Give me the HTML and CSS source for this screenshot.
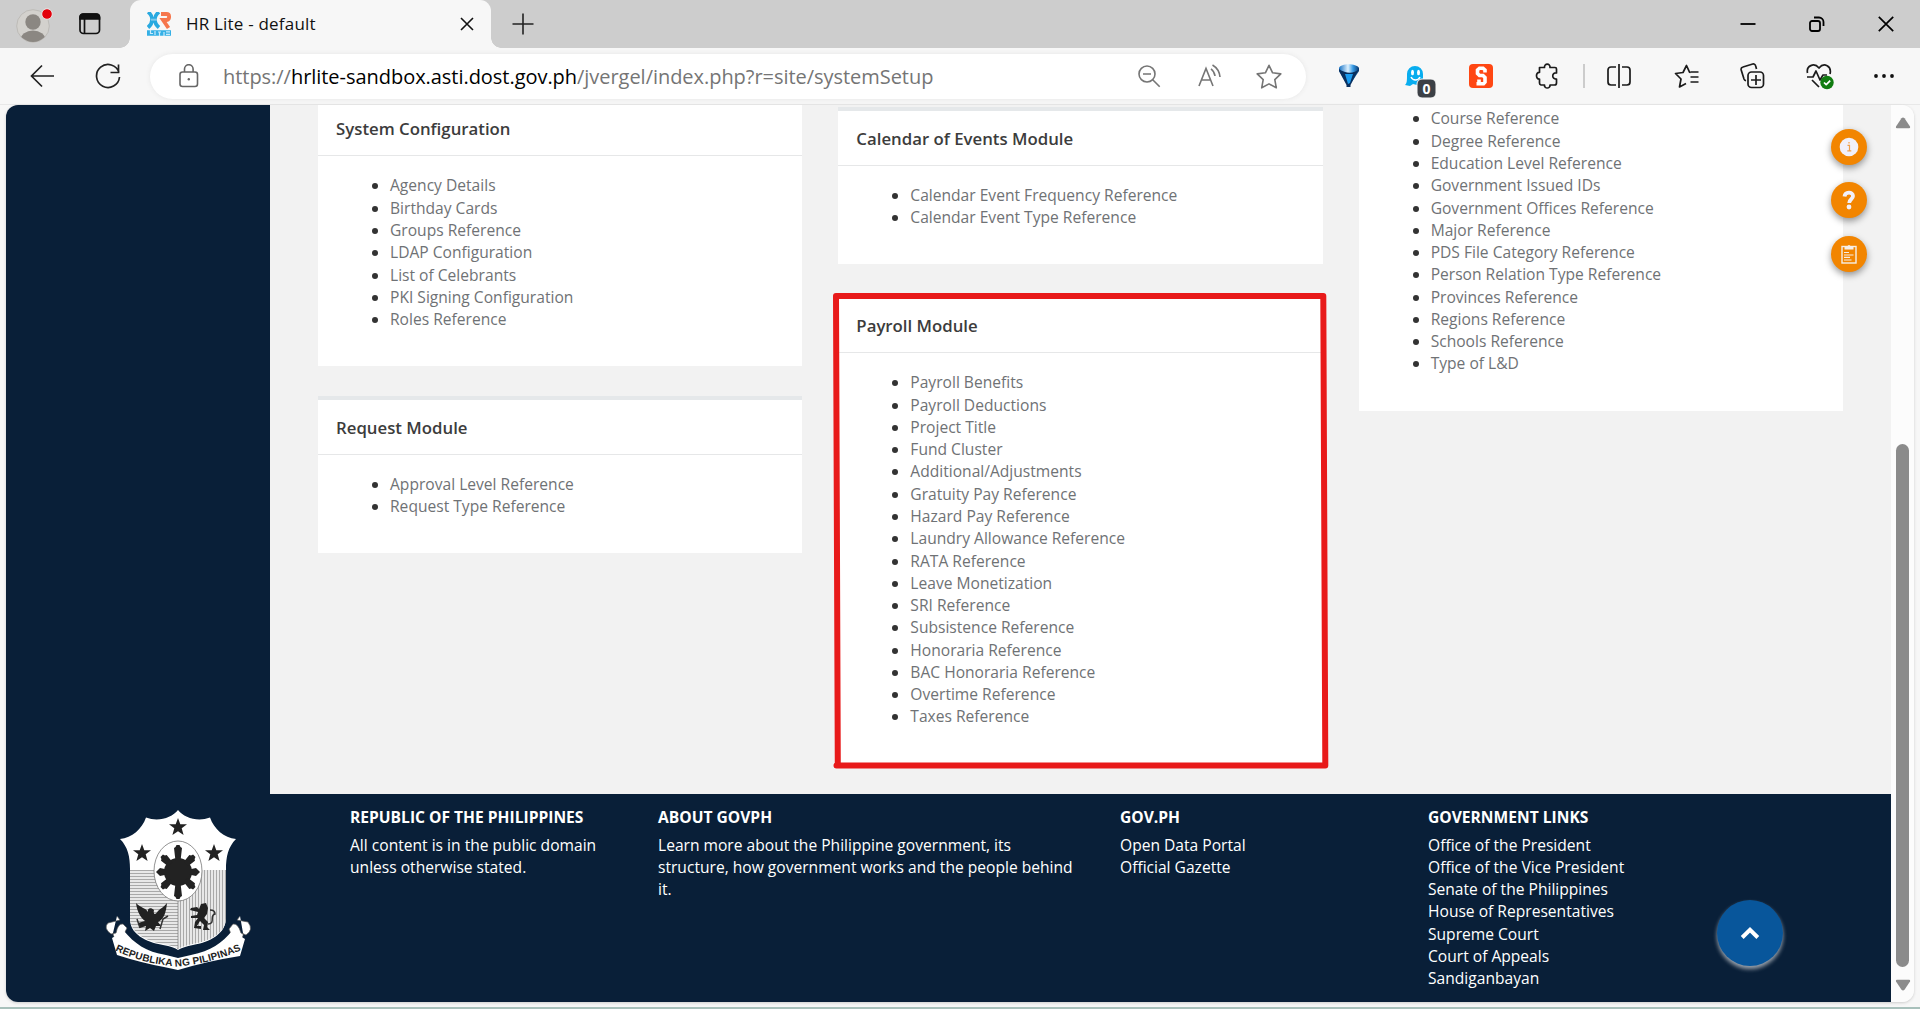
FILE: index.html
```html
<!DOCTYPE html>
<html lang="en">
<head>
<meta charset="utf-8">
<title>HR Lite - default</title>
<link rel="stylesheet" href="styles.css">
</head>
<body>
<div class="browser">
  <div class="tabbar">
    <svg class="avatar" width="44" height="42" viewBox="0 0 44 42"><defs><clipPath id="av"><circle cx="17" cy="20" r="16"/></clipPath></defs><circle cx="17" cy="20" r="16.3" fill="#d3d1cd" stroke="#bdbbb7"/><g clip-path="url(#av)" fill="#8b8782"><circle cx="17" cy="16" r="7.7"/><ellipse cx="17" cy="34" rx="12.5" ry="9.5"/></g><circle cx="31" cy="8" r="5.3" fill="#e3000b" stroke="#e8e8e8" stroke-width="1"/></svg>
    <svg class="workspaces" width="22" height="22" viewBox="0 0 22 22" fill="none" stroke="#111" stroke-width="1.7"><rect x="1" y="1" width="19.5" height="19.5" rx="3.5"/><path d="M1 5V4a3 3 0 0 1 3-3h13.500a3 3 0 0 1 3 3v2H1z" fill="#111"/><path d="M5.500 6v14"/></svg>
    <div class="tab">
      <svg width="24" height="24" viewBox="0 0 24 24" fill="none" stroke-width="3.800"><path d="M1 0c5.500 4 5.500 11 0 15.500M12 0c-5.500 4-5.500 11 0 15.500" stroke="#29a9e0"/><path d="M4 7.700h6" stroke="#7cc8ea" stroke-width="2"/><path d="M14 2h5.500c3.500 0 3.500 5.500 0 6H16l5.500 8" stroke="#f6764c"/><path d="M0 21h24" stroke="#35b0e6" stroke-width="5.500"/><path d="M3.500 18v3.500H6M8 19v4M11 20h3M12.500 20v4M17 20v4M19 19.800h4M19 22.300h4" stroke="#c9eafa" stroke-width="1.200"/></svg>
      <span class="tab-title">HR Lite - default</span>
      <svg class="tab-close" width="14" height="14" viewBox="0 0 14 14" stroke="#111" stroke-width="1.600"><path d="M1 1l12 12M13 1L1 13"/></svg>
    </div>
    <svg class="new-tab" width="22" height="22" viewBox="0 0 22 22" stroke="#222" stroke-width="1.600"><path d="M11 .500v21M.500 11h21"/></svg>
    <div class="window-buttons">
      <svg width="16" height="16" viewBox="0 0 16 16" stroke="#000" stroke-width="1.800"><path d="M.500 8h15"/></svg>
      <svg width="16" height="16" viewBox="0 0 16 16" fill="none" stroke="#000" stroke-width="1.800"><rect x="1" y="5" width="10" height="10" rx="2"/><path d="M5 1.500h5a4.500 4.500 0 0 1 4.500 4.500v4"/></svg>
      <svg width="16" height="16" viewBox="0 0 16 16" stroke="#000" stroke-width="1.700"><path d="M.800.800l14.400 14.400M15.200.800L.800 15.200"/></svg>
    </div>
  </div>
  <div class="toolbar">
    <svg class="back" width="24" height="24" viewBox="0 0 24 24" fill="none" stroke="#222" stroke-width="1.700"><path d="M12 1.500L1.500 12 12 22.500M1.500 12H24"/></svg>
    <svg class="reload" width="26" height="26" viewBox="0 0 26 26" fill="none" stroke="#222" stroke-width="1.700"><path d="M24 9.500A11.500 11.500 0 1 0 24.500 14M23.500 1.500v8h-8"/></svg>
    <div class="address">
      <svg class="lock" width="20" height="24" viewBox="0 0 20 24" fill="none" stroke="#666" stroke-width="1.600"><rect x="1" y="8" width="17.500" height="14.500" rx="2.500"/><path d="M5.500 8V5a4.300 4.300 0 0 1 8.600 0v3"/><circle cx="9.800" cy="15.200" r="1.200" fill="#666" stroke="none"/></svg>
      <span class="url">https://<b>hrlite-sandbox.asti.dost.gov.ph</b>/jvergel/index.php?r=site/systemSetup</span>
      <svg class="zoom" width="23" height="23" viewBox="0 0 23 23" fill="none" stroke="#757575" stroke-width="1.600"><circle cx="9" cy="9" r="8"/><path d="M5 9h8M14.700 14.700l7 7"/></svg>
      <svg class="read" width="24" height="24" viewBox="0 0 24 24" fill="none" stroke="#757575" stroke-width="1.600"><path d="M1 22L8 4.500 15 22M3.500 16h9M13 4.800c2.300 1.600 3.500 4 4 7.200M14.500 1c4 2.400 7 6.500 7.500 12"/></svg>
      <svg class="star" width="26" height="25" viewBox="0 0 26 25" fill="none" stroke="#757575" stroke-width="1.600" stroke-linejoin="round"><path d="M13 1.300l3.600 7.500 8.200 1.100-6 5.700 1.500 8.200-7.300-3.900-7.300 3.900 1.500-8.200-6-5.700 8.200-1.100z"/></svg>
    </div>
    <div class="extensions">
      <svg class="ext-balloon" width="26" height="30" viewBox="0 0 26 30"><defs><linearGradient id="bl" x1="0" x2="1"><stop offset="0" stop-color="#1470c4"/><stop offset=".45" stop-color="#ddf1ff"/><stop offset=".7" stop-color="#3599e4"/><stop offset="1" stop-color="#07356c"/></linearGradient></defs><path d="M3 7c2-5 17-5 20 0v3L14.500 23h-4L3 10z" fill="url(#bl)"/><path d="M3 10l7.500 14v2h4v-2L23 8c-5 5-13 5-20 0z" fill="#092f5e"/><path d="M9 13l3 10 2-1 3-9z" fill="#1a9bf0"/></svg>
      <svg class="ext-ghost" width="32" height="36" viewBox="0 0 32 36"><path d="M3 11a8 8 0 0 1 16 0v11l-3-1-3 1-4-1-3 2-5-1c2-2 2-4 2-11z" fill="#08adef"/><ellipse cx="8.500" cy="9.500" rx="1.500" ry="2.700" fill="#fff"/><ellipse cx="14.500" cy="9.500" rx="1.500" ry="2.700" fill="#fff"/><path d="M7 14c2 4 7 4 9 0" fill="none" stroke="#fff" stroke-width="1.500"/><rect x="13" y="16" width="19" height="19" rx="5" fill="#3c4046" stroke="#f7f7f7"/><text class="badge" x="22.500" y="31" text-anchor="middle">0</text></svg>
      <svg class="ext-s" width="24" height="24" viewBox="0 0 24 24"><rect width="24" height="24" rx="4" fill="#ff4713"/><path d="M16 8.500V6L14 4.200h-3.500L8.500 6v3.500l2 2H14l2 2V18l-1.500 1.800H7.500M10 19V15.500" fill="none" stroke="#fff" stroke-width="3.600"/></svg>
      <svg class="ext-puzzle" width="24" height="26" viewBox="0 0 24 26" fill="none" stroke="#1b1b1b" stroke-width="1.700" stroke-linejoin="round"><path d="M4.500 4.500h5c-.500-4.500 6-4.500 5.500 0H20a1.500 1.500 0 0 1 1.500 1.500v4c-5-.800-5 6.500 0 6v4a2 2 0 0 1-2 2H15c.500 4-6 4-5.500 0H6a2 2 0 0 1-1.500-2v-4c-4 .500-4-7 0-6.500z"/></svg>
      <i class="separator"></i>
      <svg class="ext-split" width="24" height="26" viewBox="0 0 24 26" fill="none" stroke="#1b1b1b" stroke-width="1.700"><path d="M9 4H4a3 3 0 0 0-3 3v12a3 3 0 0 0 3 3h5M15 4h5a3 3 0 0 1 3 3v12a3 3 0 0 1-3 3h-5M12 1v24"/></svg>
      <svg class="ext-favorites" width="25" height="26" viewBox="0 0 25 26" fill="none" stroke="#1b1b1b" stroke-width="1.700" stroke-linejoin="round"><path d="M16.500 9.500l-1-.3L12.500 2.500 9 9.500l-7.500 1 5.500 5.500-1.500 8 6.500-3.500M16.500 9h8M16.500 14h8M16.500 19h8"/></svg>
      <svg class="ext-collections" width="25" height="26" viewBox="0 0 25 26" fill="none" stroke="#1b1b1b" stroke-width="1.700"><rect x="8" y="9" width="15.500" height="15.500" rx="3.500"/><path d="M16 12v10M11 17h10M16.500 6l-.800-3a2.500 2.500 0 0 0-3-2L3 4a2.500 2.500 0 0 0-1.800 3L4 16a3 3 0 0 0 2 1.800"/></svg>
      <svg class="ext-health" width="28" height="27" viewBox="0 0 28 27" fill="none" stroke="#1b1b1b" stroke-width="1.700" stroke-linejoin="round"><path d="M1.500 10C0 3 8-1 13 5c5-6 13-2 11 6M1 14h6l3-6 4 9 3-5h4M6 17l7 7"/><circle cx="21" cy="19.500" r="6.700" fill="#107c10" stroke="none"/><path d="M18 19.500l2.200 2.200 4-4" stroke="#fff"/></svg>
      <svg class="ext-more" width="20" height="6" viewBox="0 0 20 6" fill="#111"><circle cx="2" cy="3" r="1.900"/><circle cx="10" cy="3" r="1.900"/><circle cx="18" cy="3" r="1.900"/></svg>
    </div>
  </div>
  <div class="viewport">
    <div class="page">
      <div class="main">
        <aside class="sidebar"></aside>
        <div class="columns">
          <div class="column column-system">
            <section class="card"><h2>System Configuration</h2><ul><li><a>Agency Details</a></li><li><a>Birthday Cards</a></li><li><a>Groups Reference</a></li><li><a>LDAP Configuration</a></li><li><a>List of Celebrants</a></li><li><a>PKI Signing Configuration</a></li><li><a>Roles Reference</a></li></ul></section>
            <section class="card"><h2>Request Module</h2><ul><li><a>Approval Level Reference</a></li><li><a>Request Type Reference</a></li></ul></section>
          </div>
          <div class="column column-calendar">
            <section class="card"><h2>Calendar of Events Module</h2><ul><li><a>Calendar Event Frequency Reference</a></li><li><a>Calendar Event Type Reference</a></li></ul></section>
            <section class="card marked"><h2>Payroll Module</h2><ul><li><a>Payroll Benefits</a></li><li><a>Payroll Deductions</a></li><li><a>Project Title</a></li><li><a>Fund Cluster</a></li><li><a>Additional/Adjustments</a></li><li><a>Gratuity Pay Reference</a></li><li><a>Hazard Pay Reference</a></li><li><a>Laundry Allowance Reference</a></li><li><a>RATA Reference</a></li><li><a>Leave Monetization</a></li><li><a>SRI Reference</a></li><li><a>Subsistence Reference</a></li><li><a>Honoraria Reference</a></li><li><a>BAC Honoraria Reference</a></li><li><a>Overtime Reference</a></li><li><a>Taxes Reference</a></li></ul>
              <svg class="marker" width="500" height="480" viewBox="0 0 500 480" fill="none" stroke="#e81a1a" stroke-width="6" stroke-linejoin="round" stroke-linecap="round"><path d="M4 4H491.300L493.300 473.500H4.500M5.800 473.500L4 4"/></svg>
            </section>
          </div>
          <div class="column">
            <section class="card continued"><ul><li><a>Course Reference</a></li><li><a>Degree Reference</a></li><li><a>Education Level Reference</a></li><li><a>Government Issued IDs</a></li><li><a>Government Offices Reference</a></li><li><a>Major Reference</a></li><li><a>PDS File Category Reference</a></li><li><a>Person Relation Type Reference</a></li><li><a>Provinces Reference</a></li><li><a>Regions Reference</a></li><li><a>Schools Reference</a></li><li><a>Type of L&amp;D</a></li></ul></section>
          </div>
        </div>
      </div>
      <footer class="footer">
        <div class="seal">
          <svg width="150" height="164" viewBox="0 0 150 164">
            <defs>
              <pattern id="hl" width="4" height="3" patternUnits="userSpaceOnUse"><rect width="4" height="3" fill="#e8e8e8"/><path d="M0 1.500h4" stroke="#999" stroke-width=".8"/></pattern>
              <pattern id="vl" width="3" height="4" patternUnits="userSpaceOnUse"><rect width="3" height="4" fill="#e8e8e8"/><path d="M1.500 0v4" stroke="#999" stroke-width=".8"/></pattern>
              <path id="st" d="M0-9l2.300 6.200H9L3.700 1.300 5.600 8 0 4.200-5.600 8l1.900-6.700L-9-2.800h6.700z"/>
              <path id="rib" d="M11 141.500Q38 154.500 73 157.500Q106 155 140 140"/>
            </defs>
            <path d="M74 1C80 9 94 13 106 8.500C110 20 120 29 132 30C124 38 122 48 122 60V110C121 128 100 134 89 136Q79 138 74 141Q70 138 59 136C48 134 26 128 26 110V60C26 48 24 38 16 30C28 29 38 20 42 8.500C54 13 68 9 74 1z" fill="#fff"/>
            <path d="M26 61H74V140Q70 137 59 135C48 133 27 127 26 110z" fill="url(#hl)"/>
            <path d="M74 61H122V110C121 127 100 133 89 135Q79 137 74 140z" fill="url(#vl)"/>
            <path d="M74 61v79" stroke="#777" stroke-width=".7"/>
            <ellipse cx="74" cy="62" rx="24" ry="30" fill="#fff" stroke="#777" stroke-width=".8"/>
            <g fill="#222">
              <use href="#st" x="74" y="18"/><use href="#st" x="38" y="44"/><use href="#st" x="110" y="44"/>
              <circle cx="74" cy="63" r="14"/>
              <path id="ray" d="M71.500 52l-1.500-13 1.500-1 1-2h3l1 2 1.500 1-1.500 13z"/>
              <use href="#ray" transform="rotate(180 74 63)"/>
              <path id="ray2" d="M71 52l-1-9 1.500-1 .8-2h3.400l.8 2 1.500 1-1 9z" transform="rotate(45 74 63)"/>
              <use href="#ray2" transform="rotate(90 74 63)"/><use href="#ray2" transform="rotate(180 74 63)"/><use href="#ray2" transform="rotate(270 74 63)"/>
              <path d="M85 60.500l7-1.500 4 4-4 4-7-1.500zM63 60.500l-7-1.500-4 4 4 4 7-1.500z"/>
              <path d="M32 94C37 99 42 99 44 103C43 99 47 98 50 101C49 105 51 107 54 102C57 99 60 98 63 94C62 104 60 110 54 113L57 117H52L50 122L46 119L41 122L42 117L36 119L34 114L41 112C36 108 33 102 32 94z"/>
              <path d="M87 99L93 98L95 100L97 95L102 94L104 99L103 105L100 109L104 113L103 118L106 121H99L100 116L96 112L93 117H97V120L90 119L91 113L94 109H87V107L93 106L94 103L86 101z"/>
            </g>
            <path d="M36 119l-3 -9M56 120l3-10 5-3M104 115c8 0 1-9 7-10q0-4-5-4" fill="none" stroke="#333" stroke-width="1.500"/>
            <g fill="#fff" stroke="#555" stroke-width=".7"><path d="M13 107L16 111L4 114Q-1 119 7 125L12 124Q14 114 19 115L23 119L20 125L14 131Q9 129 9 124"/><path d="M136 107L133 111L144 113Q150 121 142 126L137 124Q134 114 129 115L125 120L127 125L135 131Q140 129 139 124"/></g>
            <path d="M8 129L20 122C30 134 42 143 62 146L74 149L87 146C107 142 118 134 128 122L141 130L136 147Q104 152 74 161L60 158Q38 154 13 146z" fill="#fff"/>
            <text class="motto"><textPath href="#rib" startOffset="0" textLength="131">REPUBLIKA NG PILIPINAS</textPath></text>
          </svg>
        </div>
        <div class="foot-col"><h3>REPUBLIC OF THE PHILIPPINES</h3><p>All content is in the public domain<br>unless otherwise stated.</p></div>
        <div class="foot-col"><h3>ABOUT GOVPH</h3><p>Learn more about the Philippine government, its<br>structure, how government works and the people behind<br>it.</p></div>
        <div class="foot-col"><h3>GOV.PH</h3><p>Open Data Portal<br>Official Gazette</p></div>
        <div class="foot-col"><h3>GOVERNMENT LINKS</h3><p>Office of the President<br>Office of the Vice President<br>Senate of the Philippines<br>House of Representatives<br>Supreme Court<br>Court of Appeals<br>Sandiganbayan</p></div>
      </footer>
    </div>
    <div class="scrollbar">
      <svg width="16" height="12" viewBox="0 0 16 12" fill="#8b8b8b"><path d="M6.500 1.200q1.500-1.500 3 0L15 9.500q.500 1.800-1 1.800H2q-1.500 0-1-1.800z"/></svg>
      <i class="thumb"></i>
      <svg width="16" height="12" viewBox="0 0 16 12" fill="#8b8b8b"><path d="M6.500 10.800q1.500 1.500 3 0L15 2.500q.500-1.800-1-1.800H2q-1.500 0-1 1.800z"/></svg>
    </div>
    <div class="float-actions">
      <span><svg width="20" height="20" viewBox="0 0 20 20"><circle cx="10" cy="10" r="9.300" fill="#f1f0fa"/><path d="M8.500 8.300h2v5.500M8.300 13.800h4M10 5v1.500" fill="none" stroke="#f0a04a" stroke-width="1.200"/></svg></span>
      <span><svg width="20" height="20" viewBox="0 0 20 20"><path d="M5.500 6.500C6 1.500 14 1.500 14 6c0 3.500-3.800 3-3.800 7" fill="none" stroke="#f1f0fa" stroke-width="3.800"/><circle cx="10" cy="17" r="2.400" fill="#f1f0fa"/></svg></span>
      <span><svg width="18" height="20" viewBox="0 0 18 20" fill="none" stroke="#f6efe9"><rect x="2" y="2.500" width="14" height="16.500" stroke-width="1.400"/><path d="M4.500 5.500V3h2.500q2-4 4 0h2.500v2.500z" fill="#f6efe9" stroke="none"/><path d="M4 8.500h5M4 11h9.500M4 13.300h6M4 16h7.500" stroke-width="1.200"/></svg></span>
    </div>
    <div class="to-top"><svg width="20" height="14" viewBox="0 0 20 14" fill="none" stroke="#fff" stroke-width="4"><path d="M2.200 11.500L10 3.800l7.800 7.700"/></svg></div>
  </div>
  <div class="desktop-edge"></div>
</div>
</body>
</html>
```
FILE: styles.css
```css
* { box-sizing: border-box; }
body { margin: 0; font-family: "Open Sans", sans-serif; font-size: 15.6px; line-height: 22.286px; color: #333; }
svg { display: block; flex: none; }
.browser { width: 1920px; height: 1009px; background: #f7f7f7; display: flex; flex-direction: column; overflow: hidden; }
.tabbar { height: 48px; background: #cdcdcd; display: flex; align-items: center; }
.avatar { margin-left: 16px; margin-top: 6px; }
.workspaces { margin-left: 19px; }
.tab { position: relative; width: 361px; height: 48px; margin-left: 29px; background: #f7f7f7; border-radius: 11px 11px 0 0; display: flex; align-items: center; padding: 0 17px; }
.tab::before, .tab::after { content: ""; position: absolute; bottom: 0; width: 10px; height: 10px; }
.tab::before { left: -10px; background: radial-gradient(circle at 0 0, transparent 9.5px, #f7f7f7 10px); }
.tab::after { right: -10px; background: radial-gradient(circle at 100% 0, transparent 9.5px, #f7f7f7 10px); }
.tab-title { margin-left: 15px; font-size: 17px; color: #111; white-space: nowrap; letter-spacing: 0.2px; }
.tab-close { margin-left: auto; }
.new-tab { margin-left: 21px; }
.window-buttons { margin-left: auto; margin-right: 26px; display: flex; gap: 53px; }
.toolbar { height: 57px; display: flex; align-items: center; border-bottom: 1px solid #e8e8e8; }
.back { margin-left: 30px; }
.reload { margin-left: 41px; }
.address { width: 1156px; height: 45px; margin-left: 29px; background: #fff; border-radius: 23px; box-shadow: 0 0 5px #e6e6e6; display: flex; align-items: center; }
.lock { margin-left: 29px; }
.url { margin-left: 24px; width: 914px; padding-top: 1px; font-size: 20px; line-height: 28px; color: #757575; white-space: nowrap; letter-spacing: -0.04px; }
.url b { font-weight: 400; color: #000; }
.zoom { margin-left: 1px; }
.read { margin-left: 37px; }
.star { margin-left: 34px; }
.extensions { margin-left: 30px; display: flex; align-items: center; }
.ext-ghost { margin: 9px 0 0 42px; }
.ext-s { margin-left: 33px; }
.ext-puzzle { margin-left: 42px; }
.separator { width: 2px; height: 24px; margin-left: 24px; background: #ccc; }
.ext-split { margin-left: 22px; }
.ext-favorites { margin-left: 43px; }
.ext-collections { margin-left: 41px; }
.ext-health { margin-left: 41px; }
.ext-more { margin-left: 40px; }
.badge { font: 700 14px "Open Sans", sans-serif; fill: #fff; }
.viewport { position: relative; margin-left: 6px; width: 1908px; height: 897px; border-radius: 12px; overflow: hidden; display: flex; box-shadow: 0 1px 3px #ccc; }
.page { width: 1885px; display: flex; flex-direction: column; }
.main { height: 689px; background: #f2f2f2; display: flex; overflow: hidden; }
.sidebar { width: 264px; background: #091f38; }
.columns { flex: 1; display: grid; grid-template-columns: repeat(3, 1fr); column-gap: 36px; padding: 0 48px; align-items: start; }
.column { display: flex; flex-direction: column; gap: 30.3px; }
.column-system { margin-top: -7.6px; }
.column-calendar { margin-top: 2px; }
.card { position: relative; background: #fff; border-top: 4px solid #e5e8ea; }
.card h2 { margin: 0; height: 55px; padding: 16px 18px 0; font-size: 16.8px; line-height: 23px; font-weight: 600; color: #3c3c3c; border-bottom: 1px solid #e6e7e8; }
.card ul { margin: 0; padding: 18px 18px 35.4px 72px; }
.card li::marker { color: #333; }
.card a { color: #6f7275; }
.card.continued { border-top: 0; }
.card.continued ul { padding-top: 2.4px; padding-bottom: 36px; }
.marker { position: absolute; left: -6px; top: -6px; }
.footer { height: 208px; background: #091f38; color: #fff; display: grid; grid-template-columns: 308px 308px 462px 308px 1fr; padding: 12px 0 0 36px; }
.seal { padding: 3px 0 0 62px; }
.motto { font: 700 10px "Liberation Sans", sans-serif; fill: #222; }
.foot-col h3 { margin: 0 0 5.6px; font-size: 15.6px; line-height: 22px; font-weight: 700; white-space: nowrap; }
.foot-col p { margin: 0; white-space: nowrap; }
.scrollbar { width: 23px; background: #fcfcfc; display: flex; flex-direction: column; align-items: center; padding: 12px 0 11px; }
.thumb { width: 13px; height: 523px; margin-top: auto; margin-bottom: 12px; border-radius: 7px; background: #8b8b8b; }
.float-actions { position: absolute; left: 1825px; top: 24px; display: flex; flex-direction: column; gap: 17.4px; }
.float-actions span { width: 36px; height: 36px; border-radius: 50%; background: #f28500; box-shadow: 0 3px 7px rgba(0,0,0,.4); display: flex; align-items: center; justify-content: center; }
.to-top { position: absolute; left: 1711px; top: 795px; width: 66px; height: 66px; border-radius: 50%; background: #08569b; box-shadow: 0 3px 4px rgba(255,255,255,.6); display: flex; align-items: center; justify-content: center; }
.desktop-edge { height: 2px; margin-top: auto; background: #a8c0bb; }
```
